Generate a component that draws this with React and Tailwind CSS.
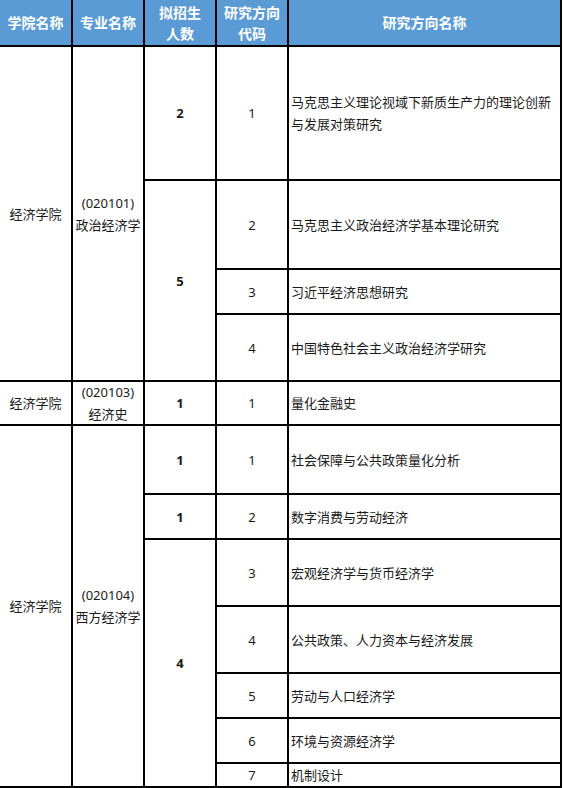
const FONT = { fontFamily: '"Noto Sans", "Noto Sans CJK SC", sans-serif' }

function Cell({ className = '', children }) {
  return (
    <div className={`bg-white flex items-center justify-center text-center text-[13px] leading-[22px] text-[#1a1a1a] ${className}`}>
      {children}
    </div>
  )
}

function Head({ className = '', children }) {
  return (
    <div className={`bg-[#5b9bd5] flex items-center justify-center text-center text-[14px] leading-[21px] font-bold text-white ${className}`}>
      {children}
    </div>
  )
}

function Topic({ className = '', children }) {
  return (
    <div className={`bg-white flex items-center pl-[2px] pr-1 text-[13px] leading-[22px] text-[#1a1a1a] col-start-5 ${className}`}>
      {children}
    </div>
  )
}

export default function App() {
  return (
    <div className="w-[563px] h-[788px] bg-white overflow-hidden" style={FONT}>
      <div className="grid w-[562px] bg-black gap-[2px] pr-[2px] pb-[2px] grid-cols-[71px_70px_70px_70px_271px] grid-rows-[45px_132px_87px_43px_65px_42px_67px_43px_65px_65px_43px_43px_22px]">
        {/* Header */}
        <Head className="col-start-1 row-start-1">学院名称</Head>
        <Head className="col-start-2 row-start-1">专业名称</Head>
        <Head className="col-start-3 row-start-1">拟招生<br />人数</Head>
        <Head className="col-start-4 row-start-1">研究方向<br />代码</Head>
        <Head className="col-start-5 row-start-1">研究方向名称</Head>

        {/* 政治经济学 */}
        <Cell className="col-start-1 row-start-2 row-span-4">经济学院</Cell>
        <Cell className="col-start-2 row-start-2 row-span-4">(020101)<br />政治经济学</Cell>
        <Cell className="col-start-3 row-start-2 font-bold">2</Cell>
        <Cell className="col-start-3 row-start-3 row-span-3 font-bold">5</Cell>
        <Cell className="col-start-4 row-start-2">1</Cell>
        <Cell className="col-start-4 row-start-3">2</Cell>
        <Cell className="col-start-4 row-start-4">3</Cell>
        <Cell className="col-start-4 row-start-5">4</Cell>
        <Topic className="row-start-2">马克思主义理论视域下新质生产力的理论创新与发展对策研究</Topic>
        <Topic className="row-start-3">马克思主义政治经济学基本理论研究</Topic>
        <Topic className="row-start-4">习近平经济思想研究</Topic>
        <Topic className="row-start-5">中国特色社会主义政治经济学研究</Topic>

        {/* 经济史 */}
        <Cell className="col-start-1 row-start-6">经济学院</Cell>
        <Cell className="col-start-2 row-start-6">(020103)<br />经济史</Cell>
        <Cell className="col-start-3 row-start-6 font-bold">1</Cell>
        <Cell className="col-start-4 row-start-6">1</Cell>
        <Topic className="row-start-6">量化金融史</Topic>

        {/* 西方经济学 */}
        <Cell className="col-start-1 row-start-7 row-span-7">经济学院</Cell>
        <Cell className="col-start-2 row-start-7 row-span-7">(020104)<br />西方经济学</Cell>
        <Cell className="col-start-3 row-start-7 font-bold">1</Cell>
        <Cell className="col-start-3 row-start-8 font-bold">1</Cell>
        <Cell className="col-start-3 row-start-9 row-span-5 font-bold">4</Cell>
        <Cell className="col-start-4 row-start-7">1</Cell>
        <Cell className="col-start-4 row-start-8">2</Cell>
        <Cell className="col-start-4 row-start-9">3</Cell>
        <Cell className="col-start-4 row-start-10">4</Cell>
        <Cell className="col-start-4 row-start-11">5</Cell>
        <Cell className="col-start-4 row-start-12">6</Cell>
        <Cell className="col-start-4 row-start-13">7</Cell>
        <Topic className="row-start-7">社会保障与公共政策量化分析</Topic>
        <Topic className="row-start-8">数字消费与劳动经济</Topic>
        <Topic className="row-start-9">宏观经济学与货币经济学</Topic>
        <Topic className="row-start-10">公共政策、人力资本与经济发展</Topic>
        <Topic className="row-start-11">劳动与人口经济学</Topic>
        <Topic className="row-start-12">环境与资源经济学</Topic>
        <Topic className="row-start-13">机制设计</Topic>
      </div>
    </div>
  )
}
